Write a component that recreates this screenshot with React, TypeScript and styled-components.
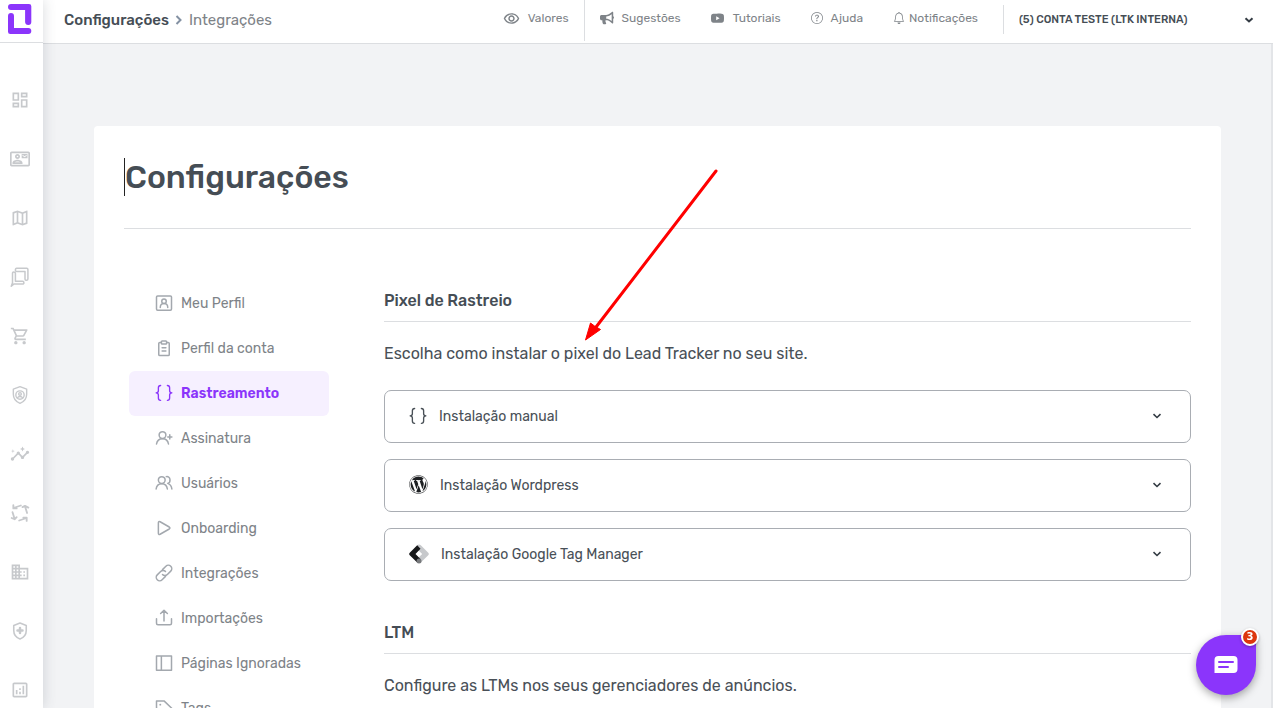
import React from "react";
import styled, { createGlobalStyle, css } from "styled-components";
import {
  MdOutlineDashboard,
  MdOutlineContactMail,
  MdOutlineMap,
  MdOutlineShoppingCart,
  MdOutlineInsights,
  MdOutlineBusiness,
  MdOutlineAnalytics,
  MdOutlineRemoveRedEye,
} from "react-icons/md";
import { FaBullhorn, FaWordpress } from "react-icons/fa";
import { BsYoutube, BsQuestionCircle, BsBell } from "react-icons/bs";

const font = `Rubik, Roboto, "Liberation Sans", sans-serif`;
const color = {
  purple: "#8b35fb",
  lilac: "#f6f0ff",
  ink: "#454d55",
  text: "#495057",
  muted: "#7e8388",
  icon: "#a3a8ae",
  rail: "#c7c9cc",
  line: "#dcdee1",
  page: "#f2f3f5",
};

const GlobalStyle = createGlobalStyle`
  *, *::before, *::after { box-sizing: border-box; }
  body { margin: 0; font-family: ${font}; color: ${color.text}; background: ${color.page}; }
  h1, h2, p, ul { margin: 0; padding: 0; }
  ul { list-style: none; }
  a { color: inherit; text-decoration: none; }
  button, select { font: inherit; color: inherit; }
  svg { display: block; flex: none; }
`;

const Shell = styled.div`
  display: flex;
  height: 100vh;
  overflow: hidden;
`;

const Rail = styled.nav`
  flex: none;
  width: 43px;
  background: #fff;
  box-shadow: 0 0 14px rgba(60, 70, 85, 0.2);
  z-index: 2;
`;

const LogoLink = styled.a`
  display: flex;
  height: 43px;
  padding: 4px 8px;
  border-bottom: 1px solid ${color.line};
`;

const RailList = styled.ul`
  display: flex;
  flex-direction: column;
  align-items: center;
  gap: 39px;
  padding: 47px 4px 0 0;
`;

const RailLink = styled.a`
  display: block;
  color: ${color.rail};
`;

const Main = styled.div`
  flex: 1;
  min-width: 0;
  display: flex;
  flex-direction: column;
`;

const TopBar = styled.header`
  flex: none;
  display: flex;
  align-items: flex-start;
  height: 44px;
  padding-right: 15px;
  background: #fff;
  border-bottom: 1px solid ${color.line};
`;

const Crumbs = styled.nav`
  display: flex;
  align-items: center;
  gap: 6px;
  height: 40px;
  padding-left: 21px;
  margin-right: auto;
  font-size: 15px;
  color: ${color.muted};

  strong { font-weight: 500; color: ${color.ink}; }
`;

const TopLink = styled.a<{ $gap: number; $space: number; $rule?: boolean }>`
  display: flex;
  align-items: center;
  gap: ${(p) => p.$gap}px;
  height: 41px;
  padding: 0 15px 5px;
  margin-right: ${(p) => p.$space}px;
  font-size: 12px;
  color: ${color.muted};
  ${(p) => p.$rule && css`border-right: 1px solid ${color.line};`}
`;

const Account = styled.label`
  position: relative;
  width: 255px;
  height: 29px;
  margin-top: 5px;
  border-left: 1px solid ${color.line};

  select {
    width: 100%;
    height: 100%;
    padding: 0 30px 0 15px;
    border: 0;
    background: none;
    appearance: none;
    font-size: 11px;
    font-weight: 500;
    color: ${color.ink};
  }
  svg { position: absolute; right: 4px; top: 10px; pointer-events: none; }
`;

const Scroller = styled.main`
  flex: 1;
  min-height: 0;
  overflow-y: auto;
  scrollbar-width: none;
  padding: 82px 50px 50px 51px;
  border-right: 2px solid #e3e5e8;
`;

const Card = styled.section`
  position: relative;
  padding: 32px 30px;
  background: #fff;
  border-radius: 4px;
`;

const TitleRow = styled.div`
  padding-bottom: 32px;
  border-bottom: 1px solid ${color.line};
`;

const Title = styled.h1`
  border-left: 1px solid #222;
  font-size: 32px;
  line-height: 38px;
  font-weight: 500;
  color: ${color.ink};
`;

const Columns = styled.div`
  display: flex;
  gap: 55px;
  padding: 52px 0 0 5px;
`;

const Menu = styled.ul`
  flex: none;
  width: 200px;
`;

const MenuLink = styled.a<{ $active?: boolean }>`
  display: flex;
  align-items: center;
  gap: 8px;
  height: 45px;
  padding-left: 26px;
  border-radius: 6px;
  font-size: 14px;
  color: ${color.muted};
  svg { margin-bottom: 2px; color: ${color.icon}; }
  ${(p) =>
    p.$active &&
    css`
      background: ${color.lilac};
      color: ${color.purple};
      font-weight: 600;
      svg { color: ${color.purple}; }
    `}
`;

const Content = styled.div`
  flex: 1;
  min-width: 0;
  padding-top: 8px;
`;

const Block = styled.section`
  padding-bottom: 40px;
`;

const BlockTitle = styled.h2`
  padding-bottom: 8px;
  border-bottom: 1px solid ${color.line};
  font-size: 16px;
  line-height: 24px;
  font-weight: 500;
  color: ${color.ink};
`;

const Lead = styled.p`
  padding: 20px 0 24px;
  font-size: 16px;
  line-height: 24px;
`;

const Options = styled.div`
  display: flex;
  flex-direction: column;
  gap: 16px;
`;

const Option = styled.button`
  display: flex;
  align-items: center;
  gap: 12px;
  height: 53px;
  padding: 0 28px 0 24px;
  border: 1px solid #a9adb3;
  border-radius: 7px;
  background: #fff;
  font-size: 14px;
  text-align: left;
  cursor: pointer;

  span { flex: 1; }
  svg { margin-bottom: 2px; }
`;

const Arrow = styled.svg`
  position: absolute;
  left: 487px;
  top: 41px;
  pointer-events: none;
`;

const Chat = styled.button`
  position: fixed;
  right: 17px;
  bottom: 13px;
  width: 60px;
  height: 60px;
  display: flex;
  align-items: center;
  justify-content: center;
  padding: 0;
  border: 0;
  border-radius: 30px 4px 30px 30px;
  background: ${color.purple};
  box-shadow: 0 3px 8px rgba(0, 0, 0, 0.35);
  z-index: 3;
`;

const Badge = styled.span`
  position: absolute;
  top: -7px;
  right: -3px;
  width: 18px;
  height: 18px;
  border: 2px solid #fff;
  border-radius: 9px;
  background: #dd360c;
  box-shadow: 0 1px 3px rgba(0, 0, 0, 0.3);
  font: 700 10px/14px "DejaVu Sans", sans-serif;
  color: #fff;
`;

type LineProps = { size?: number; width?: number; children: React.ReactNode };

const Line = ({ size = 18, width = 2, children }: LineProps) => (
  <svg
    width={size}
    height={size}
    viewBox="0 0 24 24"
    fill="none"
    stroke="currentColor"
    strokeWidth={width}
    strokeLinecap="round"
    strokeLinejoin="round"
    aria-hidden="true"
  >
    {children}
  </svg>
);

const Logo = () => (
  <svg width="24" height="30" viewBox="0 0 24 30" fill={color.purple} aria-hidden="true">
    <path d="M3 0h18a2.3 2.3 0 0 1 2.3 2.3V18a3 3 0 0 1-3 3a3.2 3.2 0 0 1-3.2-3V6H3a3 3 0 0 1 0-6z" />
    <path d="M3 9a3 3 0 0 1 3 3v12h14.300a3 3 0 0 1 0 6H2.300A2.300 2.300 0 0 1 0 27.700V12a3 3 0 0 1 3-3z" />
  </svg>
);

const Chevron = ({ width = 2 }: { width?: number }) => (
  <svg width="10" height="10" viewBox="0 0 10 10" fill="none" stroke="#343c44" strokeWidth={width} aria-hidden="true">
    <path d="M1.500 3.200L5 6.500L8.500 3.200" />
  </svg>
);

const Braces = () => (
  <Line width={1.800}>
    <path d="M7.500 2C5 2 4.500 3.200 4.500 5v4c0 2-.8 2.800-3 2.800C3.700 11.800 4.500 12.800 4.500 14.800v4c0 1.800.5 3 3 3" />
    <path d="M16.500 2c2.500 0 3 1.200 3 3v4c0 2 .8 2.800 3 2.800c-2.200 0-3 1-3 3v4c0 1.800-.5 3-3 3" />
  </Line>
);

const TagManager = () => (
  <svg width="20" height="20" viewBox="0 0 20 20" aria-hidden="true">
    <path d="M10 .5a2.500 2.500 0 0 1 1.800.8l7.200 7.200a2 2 0 0 1 0 3L11.800 18.600L8 15l5.200-5L7.500 4.500L8.200 1.300A2.500 2.500 0 0 1 10 .5z" fill="#c7c9cc" />
    <path d="M8.200 1.300L11.500 4.800L6.500 10l5.200 5.200L8.200 18.600L1 11.500a2 2 0 0 1 0-3z" fill="#17181a" />
    <circle cx="10" cy="16.900" r="2.500" fill="#77797c" />
  </svg>
);

const railItems = [
  { label: "Painel", icon: <MdOutlineDashboard size={20} /> },
  { label: "Contatos", icon: <MdOutlineContactMail size={20} /> },
  { label: "Mapa", icon: <MdOutlineMap size={20} /> },
  {
    label: "Leads",
    icon: (
      <Line size={20} width={1.800}>
        <path d="M8 1.500H20q1.500 0 1.500 1.500V14.500q0 1.500-1.700 1.500T18 14.500V5.500H8Q6.500 5.500 6.500 3.500T8 1.500z" />
        <path d="M4.500 6Q6.500 6 6.500 7.700V17H15q1.700 0 1.700 1.800T15 20.500H4.500L1.500 23L3 19V7.700Q3 6 4.500 6z" />
      </Line>
    ),
  },
  { label: "Vendas", icon: <MdOutlineShoppingCart size={20} /> },
  {
    label: "Privacidade",
    icon: (
      <Line size={20} width={1.700}>
        <path d="M12 2l8 3v6c0 5-3.300 9-8 11c-4.700-2-8-6-8-11V5z" />
        <circle cx="12" cy="12" r="5" />
        <circle cx="12" cy="10.700" r="1.600" />
        <path d="M9 15.300c1-2 5-2 6 0" />
      </Line>
    ),
  },
  { label: "Tendências", icon: <MdOutlineInsights size={20} /> },
  {
    label: "Ciclos",
    icon: (
      <Line size={20} width={2.200}>
        <path d="M13 3L4 6M4 2.500V6.500H8" />
        <path d="M20.500 12L18 4M15 5l3-1.500L22 5.500" />
        <path d="M11 21l9-3M16 17.500h4V21.500" />
        <path d="M3 11l2.500 8M2 18l3.500 1.500L8 17" />
      </Line>
    ),
  },
  { label: "Empresas", icon: <MdOutlineBusiness size={20} /> },
  {
    label: "Segurança",
    icon: (
      <Line size={20} width={1.900}>
        <path d="M12 2.500l7.500 2.800v6c0 4.700-3 8.500-7.500 10.200c-4.500-1.700-7.500-5.500-7.500-10.200v-6z" />
        <path d="M12 8.500v6M9 11.500h6" strokeWidth="3" />
      </Line>
    ),
  },
  { label: "Relatórios", icon: <MdOutlineAnalytics size={20} /> },
];

const topItems = [
  { label: "Valores", icon: <MdOutlineRemoveRedEye size={17} />, gap: 8, space: 0, rule: true },
  { label: "Sugestões", icon: <FaBullhorn size={14} />, gap: 8, space: 0 },
  { label: "Tutoriais", icon: <BsYoutube size={13} />, gap: 9, space: 0 },
  { label: "Ajuda", icon: <BsQuestionCircle size={12} />, gap: 8, space: 0 },
  { label: "Notificações", icon: <BsBell size={12} />, gap: 4, space: 10 },
];

const menuItems = [
  {
    label: "Meu Perfil",
    icon: (
      <Line>
        <rect x="2" y="2.500" width="20" height="19" rx="1.500" />
        <circle cx="12" cy="9.500" r="3" />
        <path d="M7 18c0-7 10-7 10 0" />
      </Line>
    ),
  },
  {
    label: "Perfil da conta",
    icon: (
      <Line>
        <path d="M8.500 4.500H6.500Q5 4.500 5 6v14.500Q5 22 6.500 22h11q1.500 0 1.500-1.500V6Q19 4.500 17.500 4.500H15.500" />
        <path d="M8.500 3.500q0-1 1-1h5q1 0 1 1v2q0 1-1 1h-5q-1 0-1-1zM9.500 11.500h5M9.500 16h5" />
      </Line>
    ),
  },
  { label: "Rastreamento", icon: <Braces />, active: true },
  {
    label: "Assinatura",
    icon: (
      <Line>
        <circle cx="10" cy="8" r="4.500" />
        <path d="M2 20c1.500-9.500 14.500-9.500 16 0M17 10.500h5.500M19.700 7.700v5.600" />
      </Line>
    ),
  },
  {
    label: "Usuários",
    icon: (
      <Line>
        <circle cx="9" cy="8" r="4.500" />
        <path d="M1.500 20c1-9.500 14-9.500 15 0M15 3.500c6-1 6.500 7.500 2 9c3 1 5 3.500 5.500 7.500" />
      </Line>
    ),
  },
  { label: "Onboarding", icon: <Line><path d="M4.500 5Q4.500 2.700 6.800 3.700L19 10.700q1.800 1.300 0 2.600L6.800 20.300Q4.500 21.300 4.500 19z" /></Line> },
  {
    label: "Integrações",
    icon: (
      <Line>
        <path d="M10 7.500l4.500-4.500a4.300 4.300 0 0 1 6.500 6.500L16.500 14c-2 2-5 1.700-6.500 0" />
        <path d="M14 16.500L9.500 21A4.300 4.300 0 0 1 3 14.500L7.500 10c2-2 5-1.700 6.500 0" />
      </Line>
    ),
  },
  { label: "Importações", icon: <Line><path d="M2 13v6q0 2 2 2h16q2 0 2-2v-6M12 16V2M7.500 6L12 1.800L16.500 6" /></Line> },
  { label: "Páginas Ignoradas", icon: <Line><path d="M2 2.500h20v19H2zM8.500 2.500v19" /></Line> },
  {
    label: "Tags",
    icon: (
      <Line>
        <path d="M2 2.500h10l10 9.500q1 1 0 2l-8 8q-1 1-2 0L2 12z" />
        <path d="M7 7.500h.1" strokeWidth="2.500" />
      </Line>
    ),
  },
];

const options = [
  { label: "Instalação manual", icon: <Braces /> },
  { label: "Instalação Wordpress", icon: <FaWordpress size={19} color="#1d1f21" /> },
  { label: "Instalação Google Tag Manager", icon: <TagManager /> },
];

export default function App() {
  return (
    <>
      <GlobalStyle />
      <Shell>
        <Rail aria-label="Principal">
          <LogoLink href="#" aria-label="Início"><Logo /></LogoLink>
          <RailList>
            {railItems.map((item) => (
              <li key={item.label}>
                <RailLink href="#" aria-label={item.label}>{item.icon}</RailLink>
              </li>
            ))}
          </RailList>
        </Rail>
        <Main>
          <TopBar>
            <Crumbs aria-label="Trilha">
              <a href="#"><strong>Configurações</strong></a>
              <svg width="8" height="10" viewBox="0 0 8 10" fill="none" stroke="#8491a3" strokeWidth="2" aria-hidden="true">
                <path d="M1.500 1L5.500 5L1.500 9" />
              </svg>
              <a href="#">Integrações</a>
            </Crumbs>
            {topItems.map((item) => (
              <TopLink key={item.label} href="#" $gap={item.gap} $space={item.space} $rule={item.rule}>
                {item.icon}
                {item.label}
              </TopLink>
            ))}
            <Account>
              <select aria-label="Conta">
                <option>(5) CONTA TESTE (LTK INTERNA)</option>
              </select>
              <Chevron />
            </Account>
          </TopBar>
          <Scroller>
            <Card>
              <TitleRow><Title>Configurações</Title></TitleRow>
              <Columns>
                <Menu>
                  {menuItems.map((item) => (
                    <li key={item.label}>
                      <MenuLink href="#" $active={item.active}>
                        {item.icon}
                        {item.label}
                      </MenuLink>
                    </li>
                  ))}
                </Menu>
                <Content>
                  <Block>
                    <BlockTitle>Pixel de Rastreio</BlockTitle>
                    <Lead>Escolha como instalar o pixel do Lead Tracker no seu site.</Lead>
                    <Options>
                      {options.map((item) => (
                        <Option key={item.label} type="button" aria-expanded="false">
                          {item.icon}
                          <span>{item.label}</span>
                          <Chevron width={1.600} />
                        </Option>
                      ))}
                    </Options>
                  </Block>
                  <Block>
                    <BlockTitle>LTM</BlockTitle>
                    <Lead>Configure as LTMs nos seus gerenciadores de anúncios.</Lead>
                  </Block>
                </Content>
              </Columns>
              <Arrow width="140" height="180" viewBox="0 0 140 180" aria-hidden="true">
                <path d="M135 4L12 164" stroke="#ff0000" strokeWidth="3" strokeLinecap="round" />
                <path d="M4.500 173L9.500 156L13.500 159L19.500 162.500z" fill="#ff0000" stroke="#ff0000" strokeWidth="1" />
              </Arrow>
            </Card>
          </Scroller>
        </Main>
        <Chat type="button" aria-label="Abrir chat">
          <svg width="24" height="18" viewBox="0 0 24 18" aria-hidden="true">
            <path d="M4 0h15.500a4 4 0 0 1 4 4v9a4 4 0 0 1-4 4H.5V4a4 4 0 0 1 4-4z" fill="#fff" />
            <path d="M5 6h14M5 11h9" stroke={color.purple} strokeWidth="2" strokeLinecap="round" />
          </svg>
          <Badge>3</Badge>
        </Chat>
      </Shell>
    </>
  );
}
